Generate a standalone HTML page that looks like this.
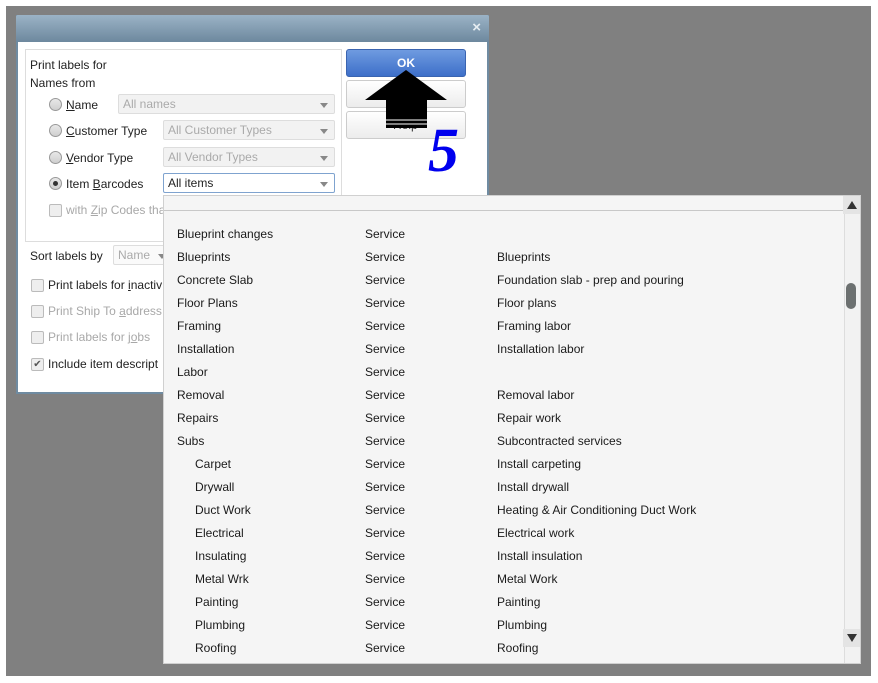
<!DOCTYPE html>
<html><head><meta charset="utf-8"><style>
*{box-sizing:border-box;margin:0;padding:0}
body{width:878px;height:683px;background:#fff;position:relative;overflow:hidden;font-family:"Liberation Sans",Arial,sans-serif;font-size:12px;color:#222}
.a{position:absolute}
.gray{left:6px;top:6px;width:865px;height:670px;background:#808080}
.dlg{left:16px;top:15px;width:473px;height:379px;background:#fff;border:2px solid #6f8ba1;border-top:none}
.title{left:16px;top:15px;width:473px;height:27px;background:linear-gradient(#9bb3c6,#6d889e);border-radius:2px 2px 0 0}
.t{position:absolute;white-space:nowrap}
.dis{color:#a8a8a8}
.combo{position:absolute;height:20px;border:1px solid #ddd;background:#f2f2f2;color:#aaa;padding:2px 4px;border-radius:2px}
.combo:after{content:"";position:absolute;right:6px;top:8px;border:4px solid transparent;border-top:5px solid #888}
.rad{position:absolute;width:13px;height:13px;border-radius:50%;border:1px solid #999;background:linear-gradient(#e8e8e8,#cfcfcf)}
.chk{position:absolute;width:13px;height:13px;border:1px solid #bbb;border-radius:2px;background:#eee}
.btn{position:absolute;left:346px;width:120px;height:28px;border:1px solid #ccc;border-radius:3px;background:linear-gradient(#fff,#ececec)}
.list{left:163px;top:195px;width:698px;height:469px;background:#f5f5f5;border:1px solid #d0d0d0;overflow:hidden}
.row{position:absolute;left:0;height:23px;width:680px;color:#1a1a1a;font-size:12px}
.row span{position:absolute;top:0}
u{text-decoration:underline}
</style></head><body>
<div class="a gray"></div>
<div class="a dlg"></div>
<div class="a title"><span class="t" style="right:8px;top:4px;color:#e6edf2;font-weight:bold;font-size:15px">×</span></div>
<div class="a" style="left:25px;top:49px;width:317px;height:193px;border:1px solid #ddd"></div>
<span class="t" style="left:30px;top:58px">Print labels for</span>
<span class="t" style="left:30px;top:76px">Names from</span>
<div class="rad" style="left:49px;top:98px"></div><span class="t" style="left:66px;top:98px"><u>N</u>ame</span>
<div class="combo" style="left:118px;top:94px;width:217px">All names</div>
<div class="rad" style="left:49px;top:124px"></div><span class="t" style="left:66px;top:124px"><u>C</u>ustomer Type</span>
<div class="combo" style="left:163px;top:120px;width:172px">All Customer Types</div>
<div class="rad" style="left:49px;top:151px"></div><span class="t" style="left:66px;top:151px"><u>V</u>endor Type</span>
<div class="combo" style="left:163px;top:147px;width:172px">All Vendor Types</div>
<div class="rad" style="left:49px;top:177px"><div style="position:absolute;left:3px;top:3px;width:5px;height:5px;border-radius:50%;background:#333"></div></div><span class="t" style="left:66px;top:177px">Item <u>B</u>arcodes</span>
<div class="combo" style="left:163px;top:173px;width:172px;background:#fff;border-color:#7fa3cf;color:#222">All items</div>
<div class="chk" style="left:49px;top:204px"></div><span class="t dis" style="left:66px;top:203px">with <u>Z</u>ip Codes tha</span>
<span class="t" style="left:30px;top:249px">Sort labels by</span>
<div class="combo" style="left:113px;top:245px;width:60px;background:#fafafa;color:#aaa">Name</div>
<div class="chk" style="left:31px;top:279px"></div><span class="t" style="left:48px;top:278px">Print labels for <u>i</u>nactiv</span>
<div class="chk" style="left:31px;top:305px"></div><span class="t dis" style="left:48px;top:304px">Print Ship To <u>a</u>ddress</span>
<div class="chk" style="left:31px;top:331px"></div><span class="t dis" style="left:48px;top:330px">Print labels for j<u>o</u>bs</span>
<div class="chk" style="left:31px;top:358px;font-size:10px;color:#555;line-height:11px;text-align:center">✔</div><span class="t" style="left:48px;top:357px">Include item descript</span>
<div class="btn" style="top:49px;background:linear-gradient(#6f9be0,#3d6fc9);border-color:#3a64b0;color:#fff;font-weight:bold;text-align:center;line-height:26px">OK</div>
<div class="btn" style="top:80px"></div>
<div class="btn" style="top:111px"><span class="t" style="left:46px;top:6px;color:#333">Help</span></div>
<svg class="a" style="left:360px;top:66px" width="95" height="66"><polygon points="46,4 87,34 67,34 67,62 26,62 26,34 5,34" fill="#000"/><line x1="26" y1="54" x2="67" y2="54" stroke="#fff" stroke-width="1"/><line x1="26" y1="58" x2="67" y2="58" stroke="#fff" stroke-width="1"/></svg>
<span class="t" style="left:428px;top:118px;font-family:'Liberation Serif',serif;font-style:italic;font-weight:bold;font-size:62px;color:#0000ee;line-height:66px">5</span>
<div class="a list">
<div style="position:absolute;left:0;top:14px;width:680px;height:1px;background:#c8c8c8"></div>
<div style="position:absolute;left:680px;top:0;width:16px;height:467px;background:#f2f2f2;border-left:1px solid #ddd"></div>
<div style="position:absolute;left:679px;top:0;width:17px;height:18px;background:#e4e4e4"></div>
<div style="position:absolute;left:679px;top:433px;width:17px;height:18px;background:#e4e4e4"></div>
<div style="position:absolute;left:683px;top:5px;border:5px solid transparent;border-bottom:8px solid #333;border-top:none"></div>
<div style="position:absolute;left:683px;top:438px;border:5px solid transparent;border-top:8px solid #333;border-bottom:none"></div>
<div style="position:absolute;left:682px;top:87px;width:10px;height:26px;border-radius:5px;background:#6c7070"></div>
<div class="row" style="top:31px"><span style="left:13px">Blueprint changes</span><span style="left:201px">Service</span></div>
<div class="row" style="top:54px"><span style="left:13px">Blueprints</span><span style="left:201px">Service</span><span style="left:333px">Blueprints</span></div>
<div class="row" style="top:77px"><span style="left:13px">Concrete Slab</span><span style="left:201px">Service</span><span style="left:333px">Foundation slab - prep and pouring</span></div>
<div class="row" style="top:100px"><span style="left:13px">Floor Plans</span><span style="left:201px">Service</span><span style="left:333px">Floor plans</span></div>
<div class="row" style="top:123px"><span style="left:13px">Framing</span><span style="left:201px">Service</span><span style="left:333px">Framing labor</span></div>
<div class="row" style="top:146px"><span style="left:13px">Installation</span><span style="left:201px">Service</span><span style="left:333px">Installation labor</span></div>
<div class="row" style="top:169px"><span style="left:13px">Labor</span><span style="left:201px">Service</span></div>
<div class="row" style="top:192px"><span style="left:13px">Removal</span><span style="left:201px">Service</span><span style="left:333px">Removal labor</span></div>
<div class="row" style="top:215px"><span style="left:13px">Repairs</span><span style="left:201px">Service</span><span style="left:333px">Repair work</span></div>
<div class="row" style="top:238px"><span style="left:13px">Subs</span><span style="left:201px">Service</span><span style="left:333px">Subcontracted services</span></div>
<div class="row" style="top:261px"><span style="left:31px">Carpet</span><span style="left:201px">Service</span><span style="left:333px">Install carpeting</span></div>
<div class="row" style="top:284px"><span style="left:31px">Drywall</span><span style="left:201px">Service</span><span style="left:333px">Install drywall</span></div>
<div class="row" style="top:307px"><span style="left:31px">Duct Work</span><span style="left:201px">Service</span><span style="left:333px">Heating &amp; Air Conditioning Duct Work</span></div>
<div class="row" style="top:330px"><span style="left:31px">Electrical</span><span style="left:201px">Service</span><span style="left:333px">Electrical work</span></div>
<div class="row" style="top:353px"><span style="left:31px">Insulating</span><span style="left:201px">Service</span><span style="left:333px">Install insulation</span></div>
<div class="row" style="top:376px"><span style="left:31px">Metal Wrk</span><span style="left:201px">Service</span><span style="left:333px">Metal Work</span></div>
<div class="row" style="top:399px"><span style="left:31px">Painting</span><span style="left:201px">Service</span><span style="left:333px">Painting</span></div>
<div class="row" style="top:422px"><span style="left:31px">Plumbing</span><span style="left:201px">Service</span><span style="left:333px">Plumbing</span></div>
<div class="row" style="top:445px"><span style="left:31px">Roofing</span><span style="left:201px">Service</span><span style="left:333px">Roofing</span></div>
</div>
</body></html>
